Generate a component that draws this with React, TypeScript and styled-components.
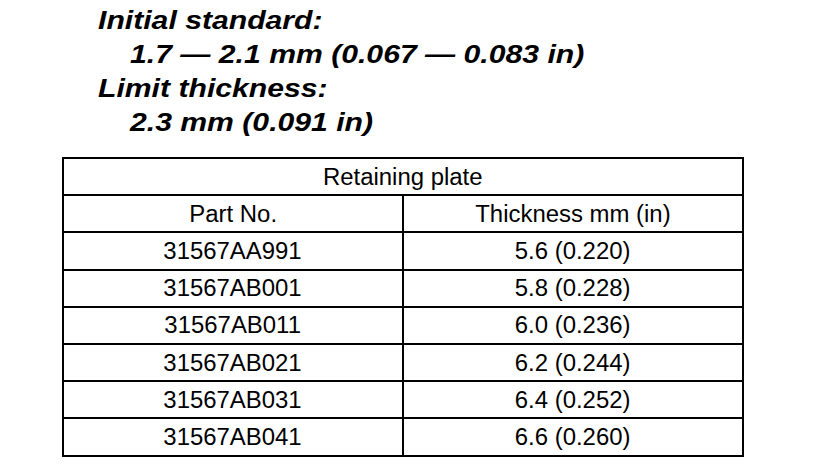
import React from "react";
import styled, { createGlobalStyle } from "styled-components";

const Global = createGlobalStyle`
  html, body { margin: 0; padding: 0; background: #fff; }
  body { font-family: "Liberation Sans", Arial, sans-serif; color: #000; }
`;

const Page = styled.div`
  width: 816px;
  height: 466px;
  padding-top: 3px;
  box-sizing: border-box;
  overflow: hidden;
`;

const Spec = styled.div`
  padding-left: 98px;
  display: flex;
  flex-direction: column;
`;

const SpecLine = styled.div<{ $indent?: boolean }>`
  height: 34px;
  line-height: 34px;
  font-size: 26px;
  font-weight: bold;
  font-style: italic;
  white-space: nowrap;
  padding-left: ${(p) => (p.$indent ? "32px" : "0")};
`;

const Stretch = styled.span<{ $x: number; $origin?: string }>`
  display: inline-block;
  transform: scaleX(${(p) => p.$x});
  transform-origin: ${(p) => p.$origin ?? "center"};
`;

const Table = styled.table`
  margin: 18px 0 0 62px;
  width: 682px;
  border-collapse: collapse;
  table-layout: fixed;
  font-size: 23px;
`;

const Cell = styled.td`
  border: 2px solid #000;
  height: 35.2px;
  padding: 0;
  text-align: center;
  vertical-align: middle;
  line-height: 24px;
  white-space: nowrap;
`;

const rows: [string, string][] = [
  ["31567AA991", "5.6 (0.220)"],
  ["31567AB001", "5.8 (0.228)"],
  ["31567AB011", "6.0 (0.236)"],
  ["31567AB021", "6.2 (0.244)"],
  ["31567AB031", "6.4 (0.252)"],
  ["31567AB041", "6.6 (0.260)"],
];

const T = ({ children }: { children: React.ReactNode }) => (
  <Stretch $x={1.04}>{children}</Stretch>
);

const H = ({ children }: { children: React.ReactNode }) => (
  <Stretch $x={1.16} $origin="left">
    {children}
  </Stretch>
);

export default function App() {
  return (
    <Page>
      <Global />
      <Spec>
        <SpecLine>
          <H>Initial standard:</H>
        </SpecLine>
        <SpecLine $indent>
          <H>1.7 — 2.1 mm (0.067 — 0.083 in)</H>
        </SpecLine>
        <SpecLine>
          <H>Limit thickness:</H>
        </SpecLine>
        <SpecLine $indent>
          <H>2.3 mm (0.091 in)</H>
        </SpecLine>
      </Spec>
      <Table>
        <tbody>
          <tr>
            <Cell colSpan={2}>
              <T>Retaining plate</T>
            </Cell>
          </tr>
          <tr>
            <Cell>
              <T>Part No.</T>
            </Cell>
            <Cell>
              <T>Thickness mm (in)</T>
            </Cell>
          </tr>
          {rows.map(([p, t]) => (
            <tr key={p}>
              <Cell>
                <T>{p}</T>
              </Cell>
              <Cell>
                <T>{t}</T>
              </Cell>
            </tr>
          ))}
        </tbody>
      </Table>
    </Page>
  );
}
